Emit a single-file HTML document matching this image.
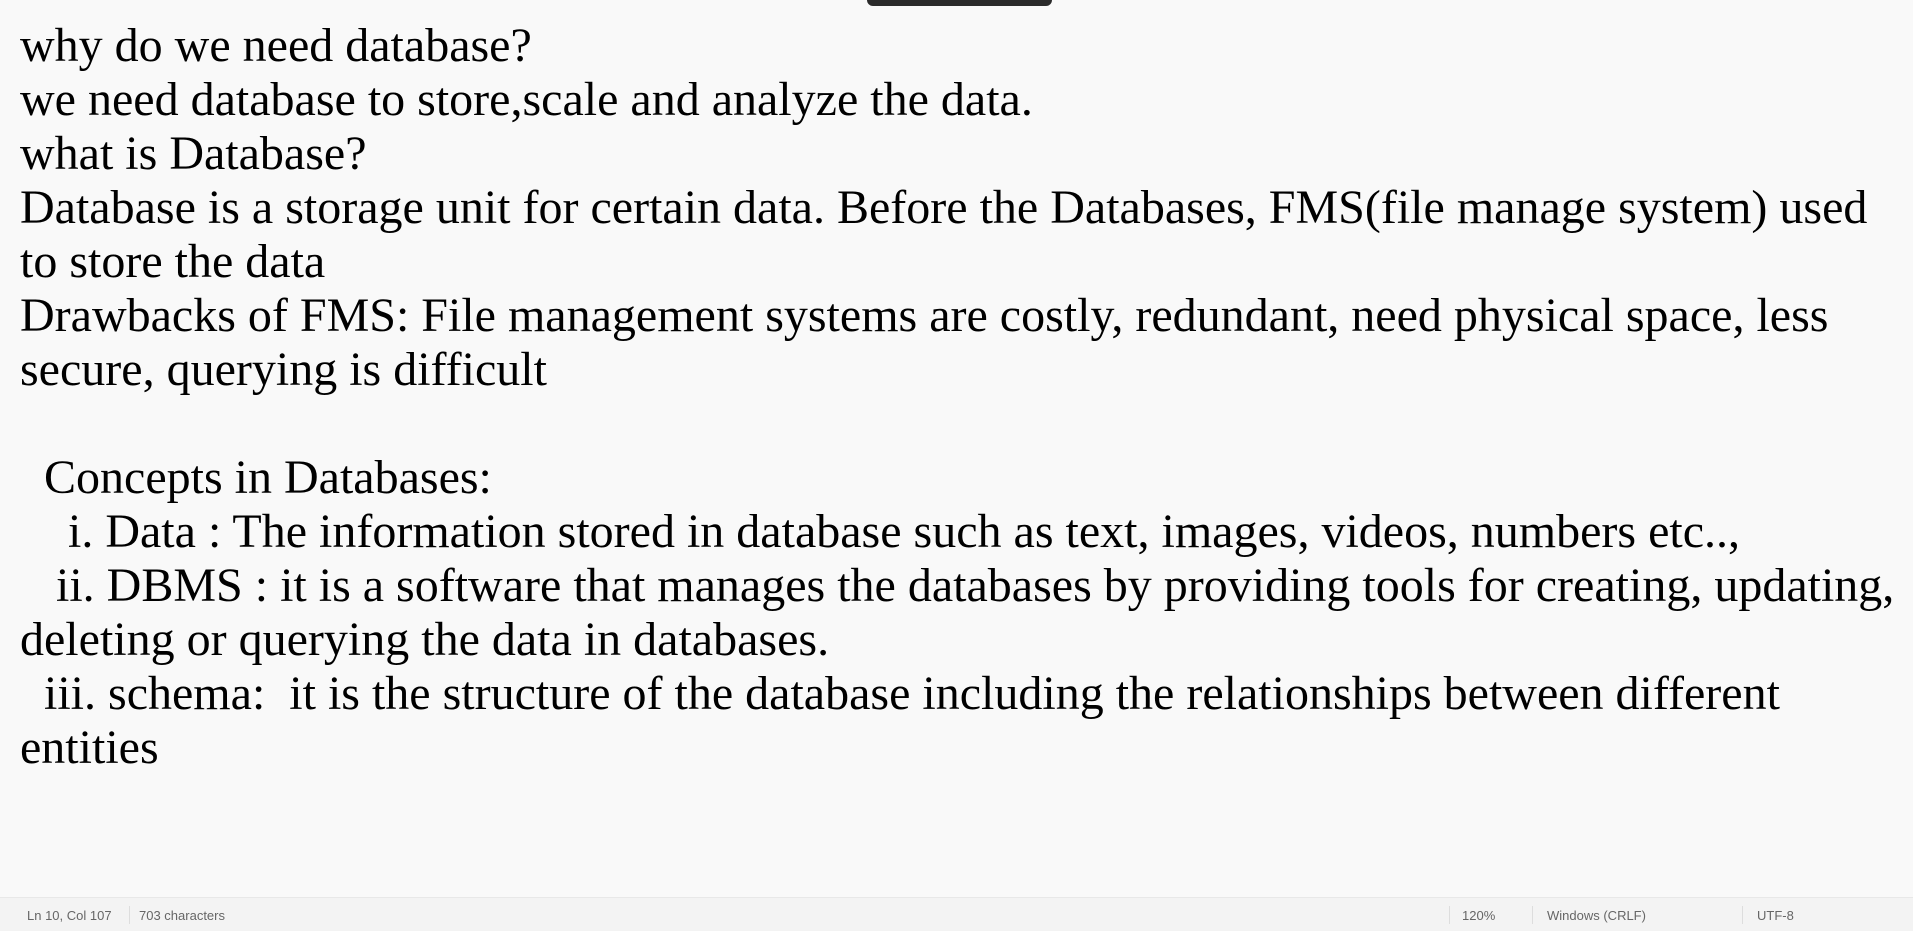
<!DOCTYPE html>
<html><head><meta charset="utf-8"><style>
html,body{margin:0;padding:0;width:1913px;height:930px;overflow:hidden;background:#f9f9f9;}
.top{position:absolute;left:867px;top:0;width:185px;height:6px;background:#2b2b2b;border-radius:0 0 6px 6px;}
.txt{position:absolute;left:20px;top:19px;margin:0;font-family:"Liberation Serif","Times New Roman",Times,serif;font-size:48px;line-height:54px;color:#000;white-space:pre;}
.sb{position:absolute;left:0;top:897px;width:1913px;height:33px;background:#f3f3f3;border-top:1px solid #e8e8e8;font-family:"Liberation Sans",Arial,sans-serif;font-size:13px;color:#666;}
.sb span{position:absolute;top:10px;}
.sep{position:absolute;top:8px;width:1px;height:18px;background:#ddd;}
</style></head><body>
<div class="top"></div>
<pre class="txt">why do we need database?
we need database to store,scale and analyze the data.
what is Database?
Database is a storage unit for certain data. Before the Databases, FMS(file manage system) used
to store the data
Drawbacks of FMS: File management systems are costly, redundant, need physical space, less
secure, querying is difficult

  Concepts in Databases:
    i. Data : The information stored in database such as text, images, videos, numbers etc..,
   ii. DBMS : it is a software that manages the databases by providing tools for creating, updating,
deleting or querying the data in databases.
  iii. schema:  it is the structure of the database including the relationships between different
entities</pre>
<div class="sb">
<span style="left:27px">Ln 10, Col 107</span>
<div class="sep" style="left:129px"></div>
<span style="left:139px">703 characters</span>
<div class="sep" style="left:1449px"></div>
<span style="left:1462px">120%</span>
<div class="sep" style="left:1532px"></div>
<span style="left:1547px">Windows (CRLF)</span>
<div class="sep" style="left:1742px"></div>
<span style="left:1757px">UTF-8</span>
</div>
</body></html>
